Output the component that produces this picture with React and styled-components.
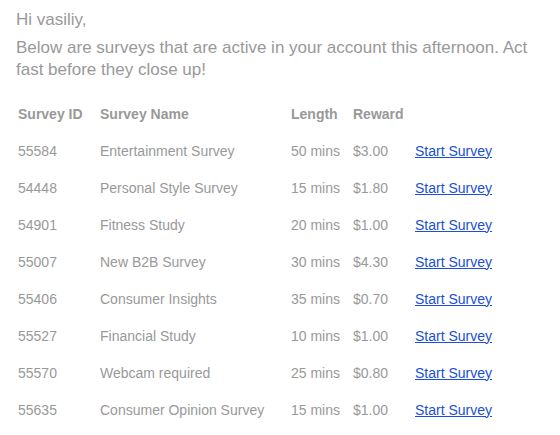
import React from "react";
import styled, { createGlobalStyle } from "styled-components";

const Global = createGlobalStyle`
  html, body { margin: 0; padding: 0; background: #ffffff; }
  body { font-family: "Liberation Sans", Arial, sans-serif; }
`;

const Page = styled.div`
  padding: 9px 16px 0 16px;
  color: #999999;
`;

const Intro = styled.div`
  font-size: 17px;
  line-height: 22px;
`;

const Greeting = styled.div`
  margin-bottom: 6px;
`;

const Table = styled.div`
  margin-top: 14px;
  padding-left: 2px;
  display: grid;
  grid-template-columns: 82px 191px 62px 62px auto;
  grid-auto-rows: 37px;
  font-size: 14px;
  align-items: center;
`;

const Head = styled.div`
  font-weight: bold;
  color: #999999;
`;

const Cell = styled.div`
  color: #999999;
`;

const Link = styled.a`
  color: #1a4fd6;
  text-decoration: underline;
  cursor: pointer;
`;

const rows = [
  ["55584", "Entertainment Survey", "50 mins", "$3.00"],
  ["54448", "Personal Style Survey", "15 mins", "$1.80"],
  ["54901", "Fitness Study", "20 mins", "$1.00"],
  ["55007", "New B2B Survey", "30 mins", "$4.30"],
  ["55406", "Consumer Insights", "35 mins", "$0.70"],
  ["55527", "Financial Study", "10 mins", "$1.00"],
  ["55570", "Webcam required", "25 mins", "$0.80"],
  ["55635", "Consumer Opinion Survey", "15 mins", "$1.00"],
];

export default function App() {
  return (
    <Page>
      <Global />
      <Intro>
        <Greeting>Hi vasiliy,</Greeting>
        Below are surveys that are active in your account this afternoon. Act fast before they close up!
      </Intro>
      <Table>
        <Head>Survey ID</Head>
        <Head>Survey Name</Head>
        <Head>Length</Head>
        <Head>Reward</Head>
        <Head />
        {rows.map((r) => (
          <React.Fragment key={r[0]}>
            <Cell>{r[0]}</Cell>
            <Cell>{r[1]}</Cell>
            <Cell>{r[2]}</Cell>
            <Cell>{r[3]}</Cell>
            <Cell>
              <Link>Start Survey</Link>
            </Cell>
          </React.Fragment>
        ))}
      </Table>
    </Page>
  );
}
